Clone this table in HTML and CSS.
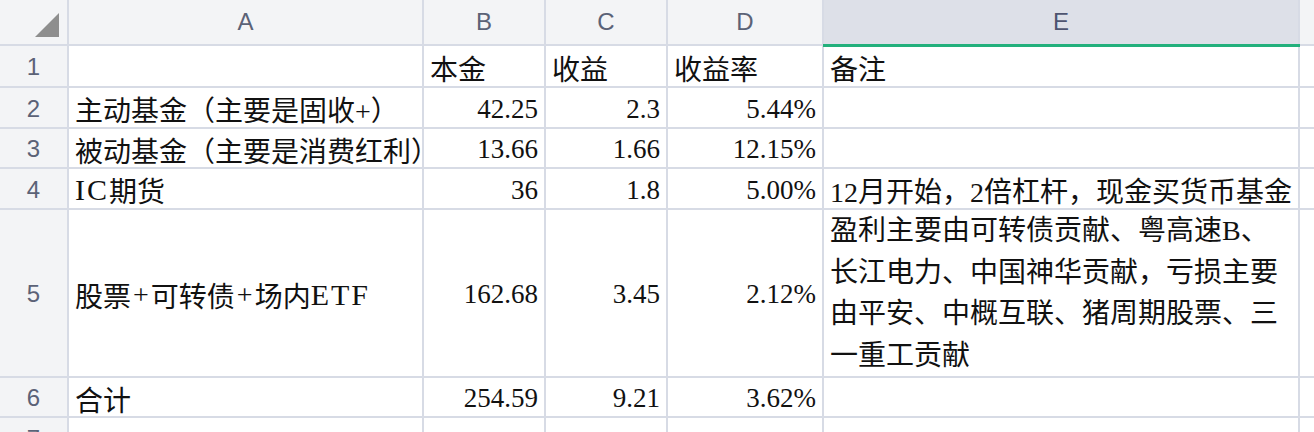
FILE: index.html
```html
<!DOCTYPE html>
<html lang="zh-CN">
<head>
<meta charset="utf-8">
<title>Sheet</title>
<link rel="stylesheet" href="styles.css">
</head>
<body>
<div class="sheet">
  <div class="corner"><svg width="24" height="24" viewBox="0 0 24 24"><polygon points="24,0 24,24 0,24" fill="#8e8e8e"/></svg></div>
  <div class="colhead">A</div>
  <div class="colhead">B</div>
  <div class="colhead">C</div>
  <div class="colhead">D</div>
  <div class="colhead selected">E</div>
  <div class="colhead"></div>

  <div class="rowhead">1</div>
  <div class="cell"></div>
  <div class="cell">本金</div>
  <div class="cell">收益</div>
  <div class="cell">收益率</div>
  <div class="cell">备注</div>
  <div class="cell"></div>

  <div class="rowhead">2</div>
  <div class="cell">主动基金（主要是固收+）</div>
  <div class="cell num">42.25</div>
  <div class="cell num">2.3</div>
  <div class="cell num">5.44%</div>
  <div class="cell"></div>
  <div class="cell"></div>

  <div class="rowhead">3</div>
  <div class="cell">被动基金（主要是消费红利）</div>
  <div class="cell num">13.66</div>
  <div class="cell num">1.66</div>
  <div class="cell num">12.15%</div>
  <div class="cell"></div>
  <div class="cell"></div>

  <div class="rowhead">4</div>
  <div class="cell"><span class="latin">IC</span>期货</div>
  <div class="cell num">36</div>
  <div class="cell num">1.8</div>
  <div class="cell num">5.00%</div>
  <div class="cell">12月开始，2倍杠杆，现金买货币基金</div>
  <div class="cell"></div>

  <div class="rowhead">5</div>
  <div class="cell">股票<span class="plus">+</span>可转债<span class="plus">+</span>场内<span class="latin">ETF</span></div>
  <div class="cell num">162.68</div>
  <div class="cell num">3.45</div>
  <div class="cell num">2.12%</div>
  <div class="cell wrap"><div class="lines"><span>盈利主要由可转债贡献、粤高速B、</span><span>长江电力、中国神华贡献，亏损主要</span><span>由平安、中概互联、猪周期股票、三</span><span>一重工贡献</span></div></div>
  <div class="cell"></div>

  <div class="rowhead">6</div>
  <div class="cell">合计</div>
  <div class="cell num">254.59</div>
  <div class="cell num">9.21</div>
  <div class="cell num">3.62%</div>
  <div class="cell"></div>
  <div class="cell"></div>

  <div class="rowhead">7</div>
  <div class="cell"></div>
  <div class="cell"></div>
  <div class="cell"></div>
  <div class="cell"></div>
  <div class="cell"></div>
  <div class="cell"></div>
</div>
</body>
</html>
```

FILE: styles.css
```css
html, body {
  margin: 0;
  padding: 0;
  background: #ffffff;
}
body {
  width: 1314px;
  height: 432px;
  overflow: hidden;
}
.sheet {
  display: grid;
  grid-template-columns: 67px 353px 120px 120px 154px 474px 1fr;
  grid-template-rows: 44px 40px 39px 38px 39px 166px 38px 40px;
  gap: 2px;
  background: #d7dbe5;
  width: 1314px;
}
.corner {
  background: #f3f4f6;
  display: flex;
  justify-content: flex-end;
  align-items: flex-end;
  padding: 0 8px 7px 0;
}
.corner svg {
  display: block;
}
.colhead {
  background: #f3f4f6;
  display: flex;
  align-items: center;
  justify-content: center;
  font-family: "Liberation Sans", Arial, sans-serif;
  font-size: 24px;
  color: #5b6277;
}
.colhead.selected {
  background: #dde0e8;
  color: #4d5470;
  position: relative;
}
.colhead.selected::after {
  content: "";
  position: absolute;
  left: -1px;
  right: -2px;
  bottom: -3px;
  height: 3px;
  background: #23b07c;
}
.rowhead {
  background: #f3f4f6;
  display: flex;
  align-items: center;
  justify-content: center;
  font-family: "Liberation Sans", Arial, sans-serif;
  font-size: 24px;
  color: #5b6277;
  padding-top: 2px;
}
.cell {
  background: #ffffff;
  display: flex;
  align-items: center;
  padding: 3px 5px 0 6px;
  font-family: "Liberation Serif", "Noto Sans CJK SC", serif;
  font-size: 28px;
  color: #111111;
  white-space: nowrap;
  overflow: hidden;
}
.latin {
  font-size: 30px;
  letter-spacing: 2px;
}
.plus {
  padding: 0 2px;
}
.num {
  justify-content: flex-end;
  font-size: 27px;
  padding-right: 6px;
}
.wrap {
  padding-top: 0;
}
.lines {
  display: flex;
  flex-direction: column;
  line-height: 41.5px;
}
```
